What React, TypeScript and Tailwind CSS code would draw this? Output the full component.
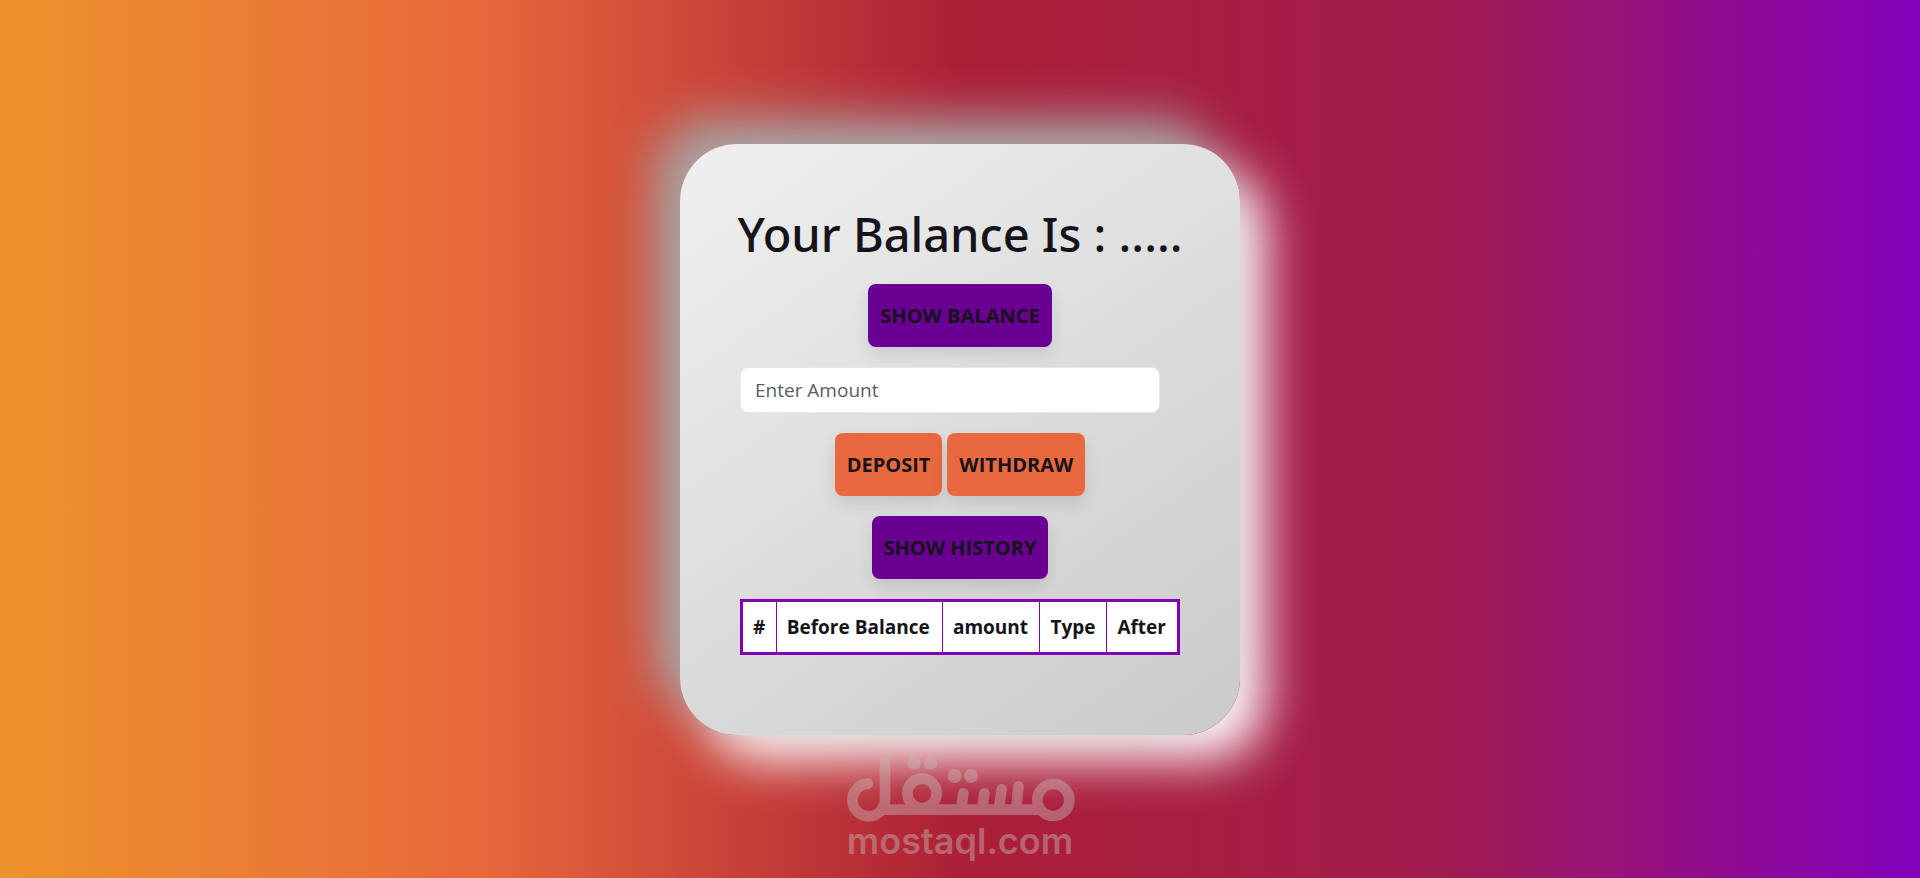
import { useState } from "react";
import type { ReactNode } from "react";
import clsx from "clsx";

const COLUMNS = ["#", "Before Balance", "amount", "Type", "After"];

type ActionButtonProps = {
  children: ReactNode;
  tone: "purple" | "orange";
  onClick?: () => void;
};

function ActionButton({ children, tone, onClick }: ActionButtonProps) {
  return (
    <button
      type="button"
      onClick={onClick}
      className={clsx(
        "h-[63px] cursor-pointer rounded-lg px-3 pt-[2px] text-[20px] font-bold uppercase shadow-[0_8px_16px_rgba(0,0,0,0.1)]",
        tone === "purple" ? "bg-[#690091]" : "bg-[#e8693d]"
      )}
    >
      {children}
    </button>
  );
}

function Watermark() {
  return (
    <div className="pointer-events-none absolute inset-x-0 bottom-[18px] flex flex-col items-center text-[#c8b4b8] opacity-45">
      <svg viewBox="45 48 687 198" className="w-[229px]" fill="none" stroke="currentColor" strokeWidth="32" aria-hidden="true">
        <path d="M111 131A49 49 0 1 0 162 180V66" strokeLinecap="round" />
        <path d="M140 209H640" />
        <circle cx="273" cy="160" r="44" />
        <path d="M397 160L391 205M460 160L454 205M512 148L504 205M562 140L556 205" strokeLinecap="round" />
        <circle cx="667" cy="180" r="48" />
        <g fill="currentColor" stroke="none">
          <circle cx="250" cy="69" r="20" />
          <circle cx="299" cy="69" r="20" />
          <circle cx="371" cy="108" r="21" />
          <circle cx="420" cy="108" r="21" />
        </g>
      </svg>
      <span className="font-['Inter',sans-serif] text-[36px] leading-[38px] font-semibold">mostaql.com</span>
    </div>
  );
}

export default function App() {
  const [amount, setAmount] = useState("");

  return (
    <main className="relative flex min-h-screen items-center justify-center bg-[linear-gradient(to_right,#ee932c,#e8683c,#ac1f36,#a21c4f,#8300bd)] font-['Open_Sans',sans-serif] text-[#16131b]">
      {/* Balance card */}
      <section className="flex w-[560px] max-w-full flex-col items-center gap-5 rounded-[57px] bg-[linear-gradient(145deg,#f0f0f0,#cacaca)] px-[60px] pt-[60px] pb-20 shadow-[-25px_-25px_50px_#a6a6a6,25px_25px_50px_#ffffff]">
        <h1 className="font-['Noto_Sans',sans-serif] text-[47px] leading-[60px] font-medium whitespace-nowrap">Your Balance Is : .....</h1>

        <ActionButton tone="purple">Show Balance</ActionButton>

        <input
          type="number"
          aria-label="Enter Amount"
          placeholder="Enter Amount"
          value={amount}
          onChange={(e) => setAmount(e.target.value)}
          className="h-[46px] w-[420px] max-w-full self-start rounded-lg border border-gray-200 bg-white px-[14px] text-[19px] placeholder:text-[#595c68] focus:outline-none"
        />

        <div className="flex gap-[5px]">
          <ActionButton tone="orange">Deposit</ActionButton>
          <ActionButton tone="orange">Withdraw</ActionButton>
        </div>

        <ActionButton tone="purple">Show History</ActionButton>

        {/* History table */}
        <table className="w-full border-collapse border-3 border-[#8300b5] bg-white text-left text-[19px]">
          <thead>
            <tr className="h-[53px]">
              {COLUMNS.map((column) => (
                <th key={column} scope="col" className="border border-[#8300b5] px-[10px] pt-[2px] font-bold whitespace-nowrap">
                  {column}
                </th>
              ))}
            </tr>
          </thead>
        </table>
      </section>

      <Watermark />
    </main>
  );
}
